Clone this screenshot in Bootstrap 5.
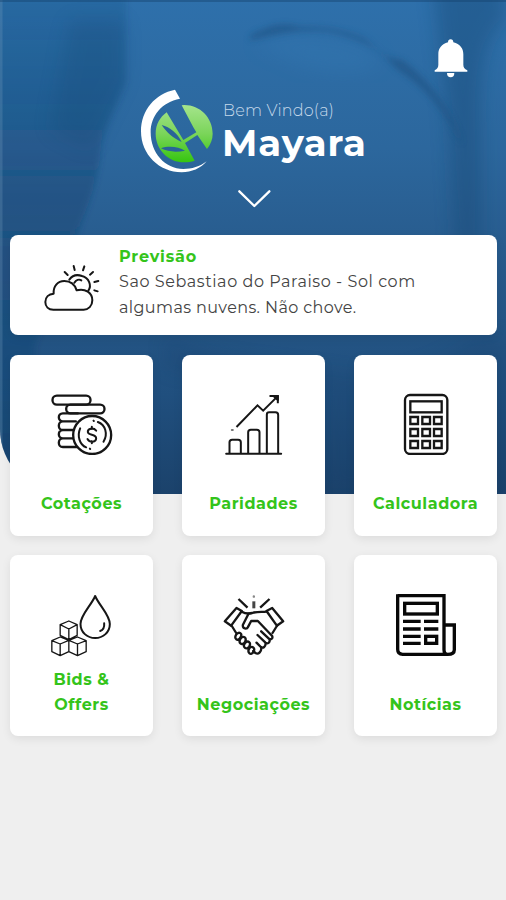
<!DOCTYPE html>
<html lang="pt-BR">
<head>
<meta charset="utf-8">
<meta name="viewport" content="width=device-width, initial-scale=1">
<title>Início</title>
<link href="https://cdn.jsdelivr.net/npm/bootstrap@5.3.0/dist/css/bootstrap.min.css" rel="stylesheet">
<style>
  body { background: #efefef; font-family: Montserrat, Inter, "Liberation Sans", sans-serif; }
  svg { display: block; flex: none; }
  .screen { height: 900px; padding: 0 9px 0 10px; overflow: hidden; }
  .backdrop { width: 100%; height: 494px; border-bottom-left-radius: 65px; z-index: 0; }
  .layer { z-index: 1; }
  .topbar { padding: 39px 29px 0 0; height: 88px; }
  .brand { padding-left: 130px; height: 86px; }
  .greeting { padding: 12px 0 0 8px; color: #fff; }
  .hello { font-size: 16px; line-height: 22px; font-weight: 300; letter-spacing: .2px; padding-left: 1px; color: #c6d9ea; }
  .user-name { font-size: 37px; line-height: 42px; font-weight: 700; letter-spacing: .9px; }
  .toggle { padding: 15px 0 0 227px; height: 61px; }
  .tile { background: #fff; border-radius: 8px; box-shadow: 0 3px 10px rgba(0,0,0,.08); }
  .forecast { height: 99.5px; padding: 8.5px 0 0 30px; font-size: 16px; line-height: 25.5px; }
  .forecast-text { margin-left: 16px; color: #444; }
  .line-a { letter-spacing: .57px; }
  .line-b { letter-spacing: .39px; }
  .green { color: #34c41a; font-weight: 700; letter-spacing: .55px; }
  .forecast .green { letter-spacing: .8px; }
  .tiles { padding-top: 20.5px; }
  .tiles > .row { --bs-gutter-x: 29px; --bs-gutter-y: 19px; margin-top: -19px; }
  .menu-tile { height: 181px; padding: 38.3px 0 20px; font-size: 16px; line-height: 25px; text-decoration: none; }
  .col:nth-child(n+4) .menu-tile { padding-bottom: 19px; }
  .ink { fill: none; stroke: #161616; stroke-width: 6; stroke-linejoin: round; stroke-linecap: round; }
  .ink-bold { stroke-width: 7; }
  .ink-thin { stroke-width: 4; }
</style>
<script src="https://cdn.jsdelivr.net/npm/bootstrap@5.3.0/dist/js/bootstrap.bundle.min.js"></script>
</head>
<body>
<div class="screen position-relative">
  <svg class="backdrop position-absolute top-0 start-0" viewBox="0 0 506 494" preserveAspectRatio="none">
    <defs>
      <linearGradient id="sky" x1="0" y1="0" x2="0" y2="1">
        <stop offset="0" stop-color="#2e70ab"/><stop offset=".3" stop-color="#2c679d"/>
        <stop offset=".55" stop-color="#27598a"/><stop offset=".8" stop-color="#204f7e"/><stop offset="1" stop-color="#1b426b"/>
      </linearGradient>
      <linearGradient id="edge" gradientUnits="userSpaceOnUse" x1="0" y1="0" x2="0" y2="494">
        <stop offset="0" stop-color="#123f6c" stop-opacity=".15"/><stop offset=".4" stop-color="#123f6c" stop-opacity=".4"/><stop offset="1" stop-color="#123f6c" stop-opacity=".15"/>
      </linearGradient>
      <filter id="soft" x="-30%" y="-30%" width="160%" height="160%"><feGaussianBlur stdDeviation="9"/></filter>
      <filter id="fine" x="-20%" y="-20%" width="140%" height="140%"><feGaussianBlur stdDeviation="3"/></filter>
    </defs>
    <rect width="506" height="494" fill="url(#sky)"/>
    <path d="M-20 -20H126V82C116 110 104 125 101 150C98 190 80 220 70 260L35 345V510H-20Z" fill="url(#edge)" filter="url(#fine)"/>
    <path d="M70 20H124V80L90 150L50 130Z" fill="#174673" opacity=".25" filter="url(#soft)"/>
    <path d="M432 -20H506V20C480 40 480 90 481 130V250H455L448 120Z" fill="#174673" opacity=".4" filter="url(#soft)"/>
    <path d="M250 36C270 24 285 22 300 27C330 26 350 32 365 39C380 52 385 58 402 60C430 80 455 115 462 145C450 120 430 90 398 70C380 50 365 40 330 32C295 28 275 36 250 40Z" fill="#1c4d7d" opacity=".55" filter="url(#fine)"/>
    <path d="M255 44C300 28 360 40 382 60C370 76 330 74 302 66Z" fill="#3679b4" opacity=".35" filter="url(#soft)"/>
    <path d="M165 334C210 360 260 360 340 372C380 380 430 370 470 340L506 334V494H325V390L165 370Z" fill="#153d68" opacity=".2" filter="url(#soft)"/>
    <rect width="2.5" height="494" fill="#7197ba" opacity=".3"/>
    <rect width="506" height="2" fill="#153e69" opacity=".4"/>
  </svg>

  <header class="layer position-relative">
    <div class="topbar d-flex justify-content-end align-items-start">
      <svg width="34" height="39" viewBox="28 26 102 117" fill="#fff" role="img" aria-label="Notificações">
        <path d="M78 27C83 27 86 31 86 36C106 41 116 54 116 72V103C116 111 119 115 128 120V124H30V120C38 115 41 111 41 103V72C41 54 51 41 70 36C70 31 73 27 78 27Z"/><path d="M67 128H89C89 137 85 141 78 141S67 137 67 128Z"/>
      </svg>
    </div>
    <div class="brand d-flex">
      <svg width="74" height="85" viewBox="30 25 222 255">
        <defs>
          <linearGradient id="leaf" gradientUnits="userSpaceOnUse" x1="0" y1="76" x2="0" y2="248"><stop offset="0" stop-color="#a5e48c"/><stop offset=".5" stop-color="#7bd55a"/><stop offset="1" stop-color="#35c50f"/></linearGradient>
        </defs>
        <path fill="#fff" d="M135 30C75 42 33 92 33 155C33 225 88 278 155 278C185 278 212 266 230 245C210 261 185 268 160 268C105 268 62 220 62 158C62 108 95 68 150 57Z"/>
        <path fill="url(#leaf)" d="M110 98C90 112 77 135 77 162C77 210 115 248 163 248C174 248 184 246 194 243L165 190L202 166L231 208C242 194 248 179 248 162C248 114 210 76 163 76L155 77L190 143L199 158L160 181L151 166Z"/>
        <path fill="#2a6398" d="M95 136C120 142 142 160 155 187C130 176 110 159 95 136ZM93 206C115 198 146 201 165 213C140 218 114 217 93 206Z"/>
      </svg>
      <div class="greeting">
        <div class="hello">Bem Vindo(a)</div>
        <div class="user-name">Mayara</div>
      </div>
    </div>
    <div class="toggle">
      <svg width="36" height="20" viewBox="319 326 108 60"><path d="M326 333L371 377L416 333" fill="none" stroke="#fff" stroke-width="7" stroke-linecap="round" stroke-linejoin="round"/></svg>
    </div>
  </header>

  <main class="layer position-relative">
    <section class="tile forecast d-flex">
      <svg class="mt-3" width="63" height="56" viewBox="29 15 189 168">
        <g class="ink">
          <path d="M69 164C54 164 45 154 45 141C45 127 55 117 70 116C68 94 82 78 102 78C121 78 133 87 139 106C165 99 186 114 186 136C186 153 174 164 160 164Z"/>
          <path d="M117 74C126 61 141 58 155 63C176 69 185 91 174 107M132 83C137 75 146 72 153 76"/>
          <path d="M130 33L133 45M162 34L158 46M188 51L179 59M204 78L192 81M202 109L192 106M103 51L112 60"/>
        </g>
      </svg>
      <div class="forecast-text">
        <div class="green">Previsão</div>
        <div class="line-a">Sao Sebastiao do Paraiso - Sol com</div>
        <div class="line-b">algumas nuvens. Não chove.</div>
      </div>
    </section>

    <nav class="tiles">
    <div class="row row-cols-3">
      <div class="col">
        <a href="#" class="tile menu-tile green d-flex flex-column align-items-center text-center">
          <svg width="62" height="62" viewBox="151.5 130 186 186"><g class="ink ink-bold">
            <rect x="156" y="138" width="114" height="27" rx="13"/><rect x="197" y="165" width="115" height="26" rx="13"/>
            <path d="M232 191H187C171 191 171 215 187 215H226M187 215C171 215 171 241 187 241H218M187 241C171 241 171 266 187 266H221M187 266C171 266 171 292 187 292H231"/>
            <circle cx="275" cy="256" r="57" fill="#fff"/>
            <path stroke-width="6" d="M239 236C229 259 238 286 257 293M292 217C315 225 323 254 309 276M279 213L280 214M268 297L269 298M287 243C279 233 261 236 262 247C263 258 287 253 287 266C287 278 268 280 261 268M274 231V238M274 275V281"/>
          </g></svg>
          <span class="mt-auto">Cotações</span>
        </a>
      </div>
      <div class="col">
        <a href="#" class="tile menu-tile green d-flex flex-column align-items-center text-center">
          <svg width="62" height="62" viewBox="158.5 130 186 186"><g class="ink">
            <path stroke-linecap="butt" stroke-linejoin="miter" d="M199 232L262 167L279 183L322 140M298 139H323V161"/>
            <path d="M310 139H323V151Z" fill="#161616"/>
            <path d="M185 241H188" stroke="#777"/>
            <path d="M168 312H333M178 312V278Q178 270 186 270H204Q212 270 212 278V312M234 312V248Q234 240 242 240H260Q268 240 268 248V312M290 312V195Q290 188 297 188H316Q324 188 324 196V312"/>
          </g></svg>
          <span class="mt-auto">Paridades</span>
        </a>
      </div>
      <div class="col">
        <a href="#" class="tile menu-tile green d-flex flex-column align-items-center text-center">
          <svg width="62" height="62" viewBox="165 130 186 186"><g class="ink ink-bold">
            <rect x="195" y="136" width="127" height="177" rx="15"/>
            <g stroke-linejoin="miter"><rect x="211" y="155" width="94" height="33"/>
            <path d="M211 202H234V223H211ZM247 202H270V223H247ZM282 202H305V223H282ZM211 238H234V259H211ZM247 238H270V259H247ZM282 238H305V259H282ZM211 274H234V295H211ZM247 274H270V295H247ZM282 274H305V295H282Z"/></g>
          </g></svg>
          <span class="mt-auto">Calculadora</span>
        </a>
      </div>
      <div class="col">
        <a href="#" class="tile menu-tile green d-flex flex-column align-items-center text-center">
          <svg width="62" height="64" viewBox="151.5 130 186 192"><g class="ink">
            <path d="M284 139C273 166 240 196 240 223C240 248 260 265 284 265S328 248 328 223C328 196 295 166 284 139Z"/>
            <path d="M311 221C312 232 308 241 299 244"/>
            <path class="ink-thin" d="M205 214L230 225V257L205 270L179 257V225ZM179 225L205 238L230 225M205 238V270M179 262L205 272V306L179 318L154 306V273ZM154 273L179 283L205 272M179 283V318M231 262L257 273V306L231 318L205 306M205 272L231 283L257 273M231 283V318M205 272L231 262"/>
          </g></svg>
          <span class="mt-auto">Bids &amp;<br>Offers</span>
        </a>
      </div>
      <div class="col">
        <a href="#" class="tile menu-tile green d-flex flex-column align-items-center text-center">
          <svg width="62" height="64" viewBox="158.5 130 186 192"><g class="ink ink-bold">
            <path stroke-linecap="butt" d="M205 148L232 174M298 148L270 174"/>
            <path d="M251 155V176" stroke="#444" stroke-width="9" stroke-linecap="butt"/>
            <path d="M251 140V141" stroke="#888"/>
            <path d="M199 175L215 184L183 228L164 215ZM306 175L289 184L320 228L339 215Z"/>
            <path d="M215 186C225 192 235 193 246 190C262 185 276 188 289 186M185 229L198 250M322 226L307 250"/>
            <path d="M235 192L218 226C217 238 230 240 234 231L243 214H263L306 259C309 267 302 271 296 267L273 245M298 268C301 279 292 284 286 279L262 256M286 281C287 291 279 297 272 292L259 279M273 294C275 304 265 316 256 310L249 304"/>
            <path d="M198 255C207 243 218 252 211 263C202 278 191 267 198 255ZM211 267C221 256 231 265 224 277C216 290 203 280 211 267ZM224 281C234 270 244 279 237 291C229 303 216 292 224 281ZM238 295C247 287 256 296 250 306C243 320 229 309 238 295Z"/>
          </g></svg>
          <span class="mt-auto">Negociações</span>
        </a>
      </div>
      <div class="col">
        <a href="#" class="tile menu-tile green d-flex flex-column align-items-center text-center">
          <svg width="62" height="64" viewBox="165 130 186 192"><g fill="none" stroke="#080808" stroke-width="10">
            <path d="M173 138H312V300Q312 314 323 314Q343 314 343 300V226H312M173 134V299Q173 314 188 314H326"/>
            <rect x="194" y="161" width="98" height="32"/>
            <path d="M189 215H242M252 215H295M189 238H242M252 238H295M189 260H242M189 281H242"/><rect x="257" y="260" width="33" height="21"/>
          </g></svg>
          <span class="mt-auto">Notícias</span>
        </a>
      </div>
    </div>
    </nav>
  </main>
</div>
</body>
</html>
